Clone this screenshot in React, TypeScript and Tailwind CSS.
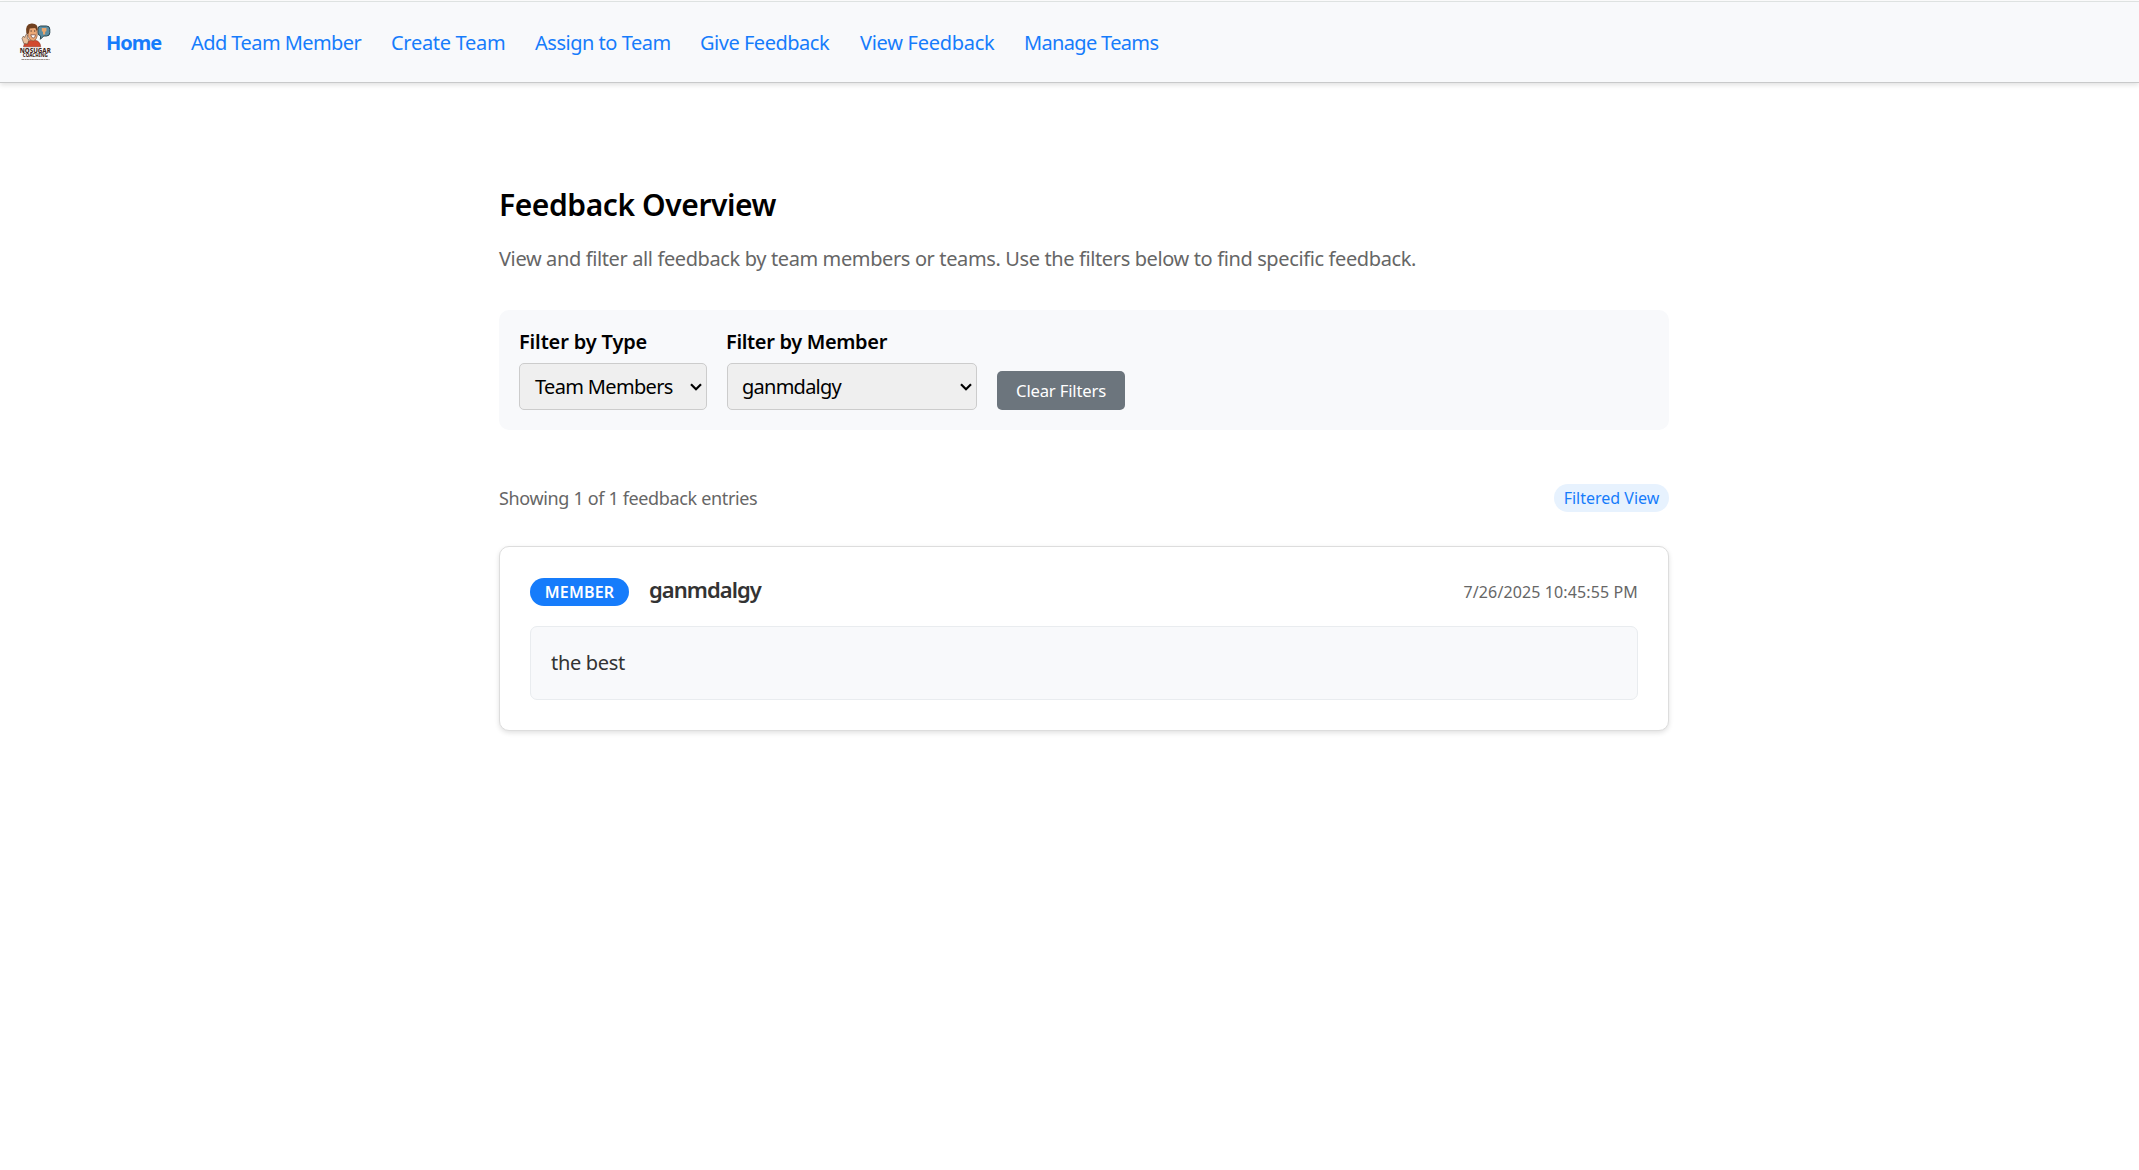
const font = { fontFamily: '"Noto Sans", "Open Sans", sans-serif' };

const links = [
  { label: "Home", cls: "w-[55px] font-bold tracking-[-1px]" },
  { label: "Add Team Member", cls: "w-[170px] tracking-[-0.56px]" },
  { label: "Create Team", cls: "w-[114px] tracking-[-0.3px]" },
  { label: "Assign to Team", cls: "w-[135px] tracking-[-0.48px]" },
  { label: "Give Feedback", cls: "w-[130px] tracking-[-0.48px]" },
  { label: "View Feedback", cls: "w-[134px] tracking-[-0.28px]" },
  { label: "Manage Teams", cls: "w-[136px] tracking-[-0.66px]" },
];

function Logo() {
  return (
    <svg viewBox="0 0 50 50" className="ml-[10px] h-[50px] w-[50px] shrink-0" aria-label="NoSugar Coaching">
      {/* speech bubble */}
      <path d="M30.500 9h6q3.300 0 3.300 3.200v3.600q0 3.200-3.300 3.200h-2.800l-3.300 3.300.2-3.500q-2.600-.4-2.600-3v-3.600q0-3.200 2.500-3.200z" fill="#5b8da3" stroke="#2c464f" strokeWidth="1" />
      <path d="M31.800 11h4.600v3.200l-1.200.6v2.700h-2.200v-2.700l-1.200-.6z" fill="#eba66c" />
      {/* sweater */}
      <path d="M13.500 29.800q.6-5.200 6.500-6.200l5.500-.3q4.900 1.200 5.200 6.500z" fill="#d2482f" stroke="#7c2f22" strokeWidth="0.500" />
      {/* face */}
      <path d="M17.500 12q0-3.500 5-3.500 4.700 0 4.700 5v5.500q-.5 4-4 5-4-.5-5-4.500z" fill="#eba877" stroke="#6b3a20" strokeWidth="0.500" />
      {/* hair */}
      <path d="M16.300 16.500Q14.800 7 21.500 6.600q6.500-.4 6.200 6l-.8 1.500-1.700-3.200-5.500.6-.8 4.200-1.300 1.800z" fill="#70401f" />
      <path d="M20.500 14h1.300M24 14h1.300" stroke="#30201a" strokeWidth="0.900" />
      <path d="M20.800 17.800h4.700q-.3 3.200-2.300 3.200t-2.400-3.200z" fill="#fff" stroke="#5b2418" strokeWidth="0.600" />
      {/* raised hand */}
      <path d="M12 21.500l1.500-2.500 1.200 1.600 1.300-3.200 1.500.6-.3 3.600 1.900 1-1.600 4.500-3.700-.6z" fill="#eac09c" stroke="#5d4435" strokeWidth="0.600" />
      <text x="25.300" y="36.200" textAnchor="middle" fontSize="6.700" fontWeight="800" fill="#43291d" textLength="31" lengthAdjust="spacingAndGlyphs" style={font}>NOSUGAR</text>
      <text x="25.300" y="40.300" textAnchor="middle" fontSize="4.600" fontWeight="800" fill="#43291d" textLength="25" lengthAdjust="spacingAndGlyphs" style={font}>COACHING</text>
      <path d="M11.500 42.500h28" stroke="#8d8078" strokeWidth="0.900" strokeDasharray="2.500 .5 1.500 .4" />
    </svg>
  );
}

function Select({ value, cls, textCls }: { value: string; cls: string; textCls: string }) {
  return (
    <button type="button" className={`flex h-[47px] items-center justify-between rounded-[5px] border border-[#cccccc] bg-[#efefef] pr-1 text-[20px] text-black ${cls}`}>
      <span className={textCls}>{value}</span>
      <svg viewBox="0 0 12 8" className="h-2 w-3" fill="none" stroke="#000" strokeWidth="2.200">
        <path d="M1 1.200 6 6.200 11 1.200" />
      </svg>
    </button>
  );
}

export default function App() {
  return (
    <div className="min-h-[1170px] bg-white" style={font}>
      <div className="h-[1px] bg-white" />
      <nav className="flex h-[82px] items-center border-t border-b border-t-[#dee2e1] border-b-[#c8c9ca] bg-[#f8f9fb] shadow-[0_2px_5px_rgba(0,0,0,0.12)]">
        <Logo />
        <div className="ml-[46px] flex gap-[30px] pt-[2px] text-[20px] text-[#167cfb]">
          {links.map((l) => (
            <a key={l.label} className={`whitespace-nowrap ${l.cls}`}>{l.label}</a>
          ))}
        </div>
      </nav>

      <main className="ml-[499px] w-[1170px] pt-[102px]">
        <h1 className="text-[30px] leading-[40px] font-semibold tracking-[-0.42px] text-black">Feedback Overview</h1>
        <p className="mt-[19px] text-[20px] leading-[30px] tracking-[-0.378px] whitespace-nowrap text-[#666666]">
          View and filter all feedback by team members or teams. Use the filters below to find specific feedback.
        </p>

        <section className="mt-9 flex h-[120px] items-end gap-5 rounded-[10px] bg-[#f8f9fb] p-5">
          <div>
            <div className="mb-[10px] text-[20px] leading-[23px] font-semibold tracking-[-0.15px] text-black">Filter by Type</div>
            <Select value="Team Members" cls="w-[188px] pl-[15px]" textCls="tracking-[-0.66px]" />
          </div>
          <div>
            <div className="-ml-[1px] mb-[10px] text-[20px] leading-[23px] font-semibold tracking-[-0.34px] text-black">Filter by Member</div>
            <Select value="ganmdalgy" cls="w-[250px] pl-[14px]" textCls="tracking-[-0.75px]" />
          </div>
          <button type="button" className="h-[39px] w-[128px] rounded-[5px] bg-[#6c757d] text-[16.67px] tracking-[-0.18px] text-white">Clear Filters</button>
        </section>

        <div className="mt-[54px] flex h-7 items-center justify-between">
          <span className="text-[18px] tracking-[-0.35px] text-[#666666]">Showing 1 of 1 feedback entries</span>
          <span className="h-7 w-[115px] rounded-full bg-[#e7f2fe] text-center text-[16px] leading-7 text-[#167cfb]">Filtered View</span>
        </div>

        <article className="mt-[34px] h-[185px] rounded-[10px] border border-[#dddddd] bg-white px-[30px] pt-[29px] shadow-[0_2px_5px_rgba(0,0,0,0.12)]">
          <header className="mb-5 flex h-[30px] items-end">
            <span className="h-7 w-[99px] rounded-full bg-[#167cfb] text-center text-[16px] leading-7 font-semibold tracking-[0.2px] text-white">MEMBER</span>
            <span className="ml-5 self-start text-[22px] leading-[27px] font-semibold tracking-[-0.95px] text-[#333333]">ganmdalgy</span>
            <span className="ml-auto text-[16px] leading-7 tracking-[0.12px] text-[#666666]">7/26/2025 10:45:55 PM</span>
          </header>
          <div className="flex h-[74px] items-center rounded-[7px] border border-[#e9ecef] bg-[#f8f9fb] px-5 text-[20px] tracking-[-0.3px] text-[#333333]">
            the best
          </div>
        </article>
      </main>
    </div>
  );
}
